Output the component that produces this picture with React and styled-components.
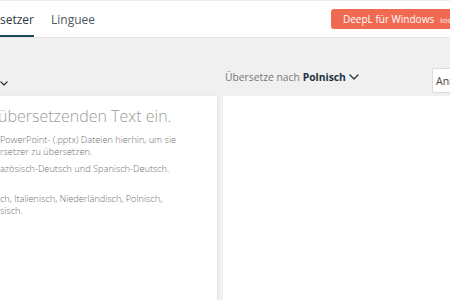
import React from "react";
import styled, { createGlobalStyle } from "styled-components";

const Global = createGlobalStyle`
  html, body { margin: 0; padding: 0; }
  body {
    width: 450px; height: 300px; overflow: hidden;
    background: #f0f0f0;
    font-family: "Open Sans", "Liberation Sans", sans-serif;
  }
`;

const Page = styled.div`
  display: flex;
  flex-direction: column;
  height: 300px;
  overflow: hidden;
`;

const Header = styled.header`
  display: flex;
  align-items: stretch;
  background: #fff;
  border-top: 1px solid #ececec;
  border-bottom: 1px solid #e4e4e4;
  box-sizing: border-box;
  height: 38px;
`;

const Tabs = styled.nav`
  display: flex;
  gap: 17px;
  align-items: stretch;
`;

const Tab = styled.div`
  display: flex;
  align-items: center;
  padding-top: 2px;
  font-size: 12px;
  color: ${(p) => (p.$active ? "#2c3a44" : "#4f5a62")};
  border-bottom: 2px solid ${(p) => (p.$active ? "#1b4a5c" : "transparent")};
  box-sizing: border-box;
`;

const HeaderRight = styled.div`
  margin-left: auto;
  display: flex;
  align-items: flex-start;
  padding-top: 8px;
`;

const CtaButton = styled.div`
  display: flex;
  align-items: baseline;
  gap: 6px;
  height: 20px;
  line-height: 20px;
  padding: 0 0 0 12px;
  width: 119px;
  box-sizing: border-box;
  background: #f06a52;
  border-radius: 3px 0 0 3px;
  color: #fff;
  font-size: 10px;
  white-space: nowrap;
  overflow: hidden;
`;

const CtaSmall = styled.span`
  font-size: 6.5px;
  opacity: 0.9;
`;

const Toolbar = styled.div`
  display: flex;
  height: 58px;
  align-items: flex-end;
  box-sizing: border-box;
`;

const LeftBar = styled.div`
  width: 223px;
  display: flex;
  align-items: center;
  padding-bottom: 10px;
`;

const RightBar = styled.div`
  flex: 1;
  display: flex;
  align-items: center;
  padding-bottom: 10px;
  padding-left: 2px;
`;

const Target = styled.div`
  display: flex;
  align-items: center;
  gap: 3px;
  font-size: 10.3px;
  color: #777;
`;

const Lang = styled.span`
  font-weight: 700;
  color: #1e3342;
`;

const AnButton = styled.div`
  margin-left: auto;
  margin-bottom: -7px;
  height: 25px;
  width: 18px;
  box-sizing: border-box;
  background: #fff;
  border: 1px solid #dcdcdc;
  border-right: none;
  border-radius: 2px 0 0 2px;
  font-size: 10.5px;
  color: #444;
  display: flex;
  align-items: center;
  padding-left: 3px;
  overflow: hidden;
  white-space: nowrap;
`;

const Panels = styled.div`
  flex: 1;
  display: flex;
  gap: 6px;
`;

const SourcePanel = styled.div`
  width: 217px;
  background: #fff;
  box-shadow: 1px 0 2px rgba(0, 0, 0, 0.06);
  padding-top: 8px;
  overflow: hidden;
`;

const TargetPanel = styled.div`
  flex: 1;
  background: #fff;
`;

const Placeholder = styled.div`
  font-size: 16px;
  font-weight: 300;
  color: #9a9a9a;
  margin-left: -2px;
  white-space: nowrap;
  line-height: 24px;
`;

const Hint = styled.p`
  margin: ${(p) => p.$mt || 0}px 0 0 0;
  font-size: 9.2px;
  font-weight: 300;
  line-height: 12px;
  color: #6f6f6f;
  white-space: nowrap;
`;

const Chevron = ({ size = 9, color = "#333" }) => (
  <svg width={size} height={size * 0.6} viewBox="0 0 10 6" fill="none">
    <path d="M1 1l4 4 4-4" stroke={color} strokeWidth="1.4" strokeLinecap="round" strokeLinejoin="round" />
  </svg>
);

export default function App() {
  return (
    <Page>
      <Global />
      <Header>
        <Tabs>
          <Tab $active>setzer</Tab>
          <Tab>Linguee</Tab>
        </Tabs>
        <HeaderRight>
          <CtaButton>
            DeepL für Windows <CtaSmall>kostenlos</CtaSmall>
          </CtaButton>
        </HeaderRight>
      </Header>
      <Toolbar>
        <LeftBar>
          <Chevron size={8} color="#222" />
        </LeftBar>
        <RightBar>
          <Target>
            Übersetze nach <Lang>Polnisch</Lang>
            <Chevron size={10} color="#2b3c48" />
          </Target>
          <AnButton>Anmelden</AnButton>
        </RightBar>
      </Toolbar>
      <Panels>
        <SourcePanel>
          <Placeholder>übersetzenden Text ein.</Placeholder>
          <Hint $mt={6}>PowerPoint- (.pptx) Dateien hierhin, um sie</Hint>
          <Hint>rsetzer zu übersetzen.</Hint>
          <Hint $mt={5}>azösisch-Deutsch und Spanisch-Deutsch.</Hint>
          <Hint $mt={18}>ch, Italienisch, Niederländisch, Polnisch,</Hint>
          <Hint>sisch.</Hint>
        </SourcePanel>
        <TargetPanel />
      </Panels>
    </Page>
  );
}
